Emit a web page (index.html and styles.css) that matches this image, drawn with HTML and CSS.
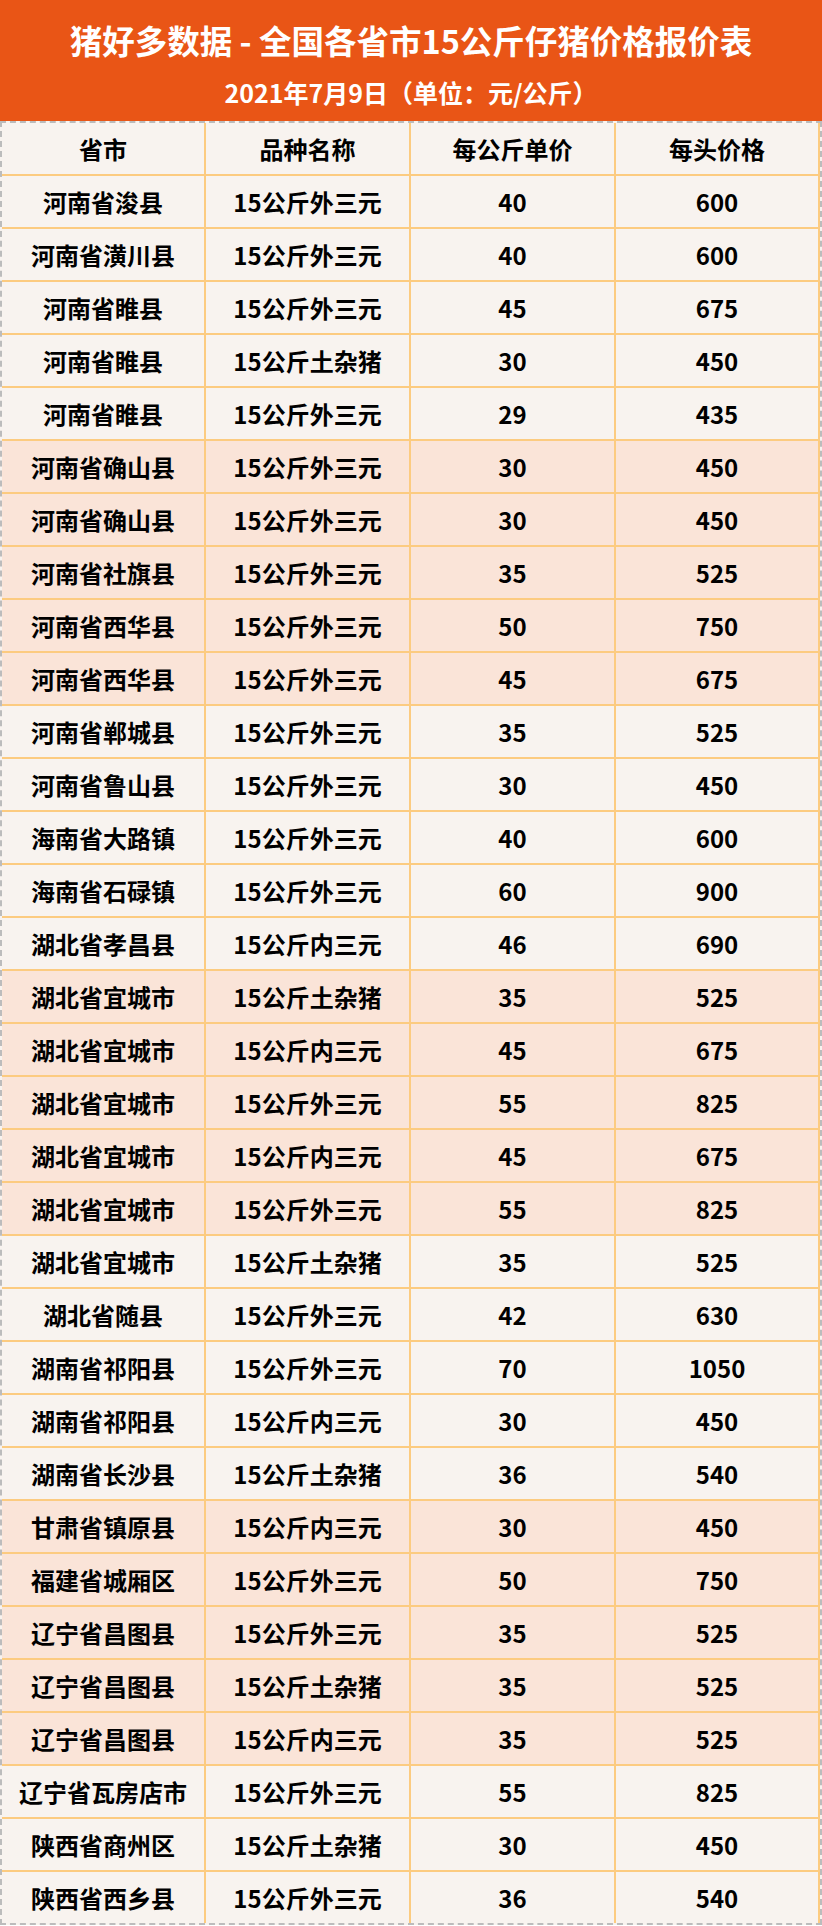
FILE: index.html
```html
<!DOCTYPE html>
<html lang="zh-CN">
<head>
<meta charset="utf-8">
<title>猪好多数据 - 全国各省市15公斤仔猪价格报价表</title>
<link rel="stylesheet" href="styles.css">
</head>
<body>
<div class="page">
  <header class="banner">
    <h1 class="title">猪好多数据 - 全国各省市15公斤仔猪价格报价表</h1>
    <p class="subtitle">2021年7月9日（单位：元/公斤）</p>
  </header>
  <div class="table">
    <div class="row head"><div class="cell">省市</div><div class="cell">品种名称</div><div class="cell">每公斤单价</div><div class="cell">每头价格</div></div>
    <div class="row"><div class="cell">河南省浚县</div><div class="cell">15公斤外三元</div><div class="cell">40</div><div class="cell">600</div></div>
    <div class="row"><div class="cell">河南省潢川县</div><div class="cell">15公斤外三元</div><div class="cell">40</div><div class="cell">600</div></div>
    <div class="row"><div class="cell">河南省睢县</div><div class="cell">15公斤外三元</div><div class="cell">45</div><div class="cell">675</div></div>
    <div class="row"><div class="cell">河南省睢县</div><div class="cell">15公斤土杂猪</div><div class="cell">30</div><div class="cell">450</div></div>
    <div class="row"><div class="cell">河南省睢县</div><div class="cell">15公斤外三元</div><div class="cell">29</div><div class="cell">435</div></div>
    <div class="row alt"><div class="cell">河南省确山县</div><div class="cell">15公斤外三元</div><div class="cell">30</div><div class="cell">450</div></div>
    <div class="row alt"><div class="cell">河南省确山县</div><div class="cell">15公斤外三元</div><div class="cell">30</div><div class="cell">450</div></div>
    <div class="row alt"><div class="cell">河南省社旗县</div><div class="cell">15公斤外三元</div><div class="cell">35</div><div class="cell">525</div></div>
    <div class="row alt"><div class="cell">河南省西华县</div><div class="cell">15公斤外三元</div><div class="cell">50</div><div class="cell">750</div></div>
    <div class="row alt"><div class="cell">河南省西华县</div><div class="cell">15公斤外三元</div><div class="cell">45</div><div class="cell">675</div></div>
    <div class="row"><div class="cell">河南省郸城县</div><div class="cell">15公斤外三元</div><div class="cell">35</div><div class="cell">525</div></div>
    <div class="row"><div class="cell">河南省鲁山县</div><div class="cell">15公斤外三元</div><div class="cell">30</div><div class="cell">450</div></div>
    <div class="row"><div class="cell">海南省大路镇</div><div class="cell">15公斤外三元</div><div class="cell">40</div><div class="cell">600</div></div>
    <div class="row"><div class="cell">海南省石碌镇</div><div class="cell">15公斤外三元</div><div class="cell">60</div><div class="cell">900</div></div>
    <div class="row"><div class="cell">湖北省孝昌县</div><div class="cell">15公斤内三元</div><div class="cell">46</div><div class="cell">690</div></div>
    <div class="row alt"><div class="cell">湖北省宜城市</div><div class="cell">15公斤土杂猪</div><div class="cell">35</div><div class="cell">525</div></div>
    <div class="row alt"><div class="cell">湖北省宜城市</div><div class="cell">15公斤内三元</div><div class="cell">45</div><div class="cell">675</div></div>
    <div class="row alt"><div class="cell">湖北省宜城市</div><div class="cell">15公斤外三元</div><div class="cell">55</div><div class="cell">825</div></div>
    <div class="row alt"><div class="cell">湖北省宜城市</div><div class="cell">15公斤内三元</div><div class="cell">45</div><div class="cell">675</div></div>
    <div class="row alt"><div class="cell">湖北省宜城市</div><div class="cell">15公斤外三元</div><div class="cell">55</div><div class="cell">825</div></div>
    <div class="row"><div class="cell">湖北省宜城市</div><div class="cell">15公斤土杂猪</div><div class="cell">35</div><div class="cell">525</div></div>
    <div class="row"><div class="cell">湖北省随县</div><div class="cell">15公斤外三元</div><div class="cell">42</div><div class="cell">630</div></div>
    <div class="row"><div class="cell">湖南省祁阳县</div><div class="cell">15公斤外三元</div><div class="cell">70</div><div class="cell">1050</div></div>
    <div class="row"><div class="cell">湖南省祁阳县</div><div class="cell">15公斤内三元</div><div class="cell">30</div><div class="cell">450</div></div>
    <div class="row"><div class="cell">湖南省长沙县</div><div class="cell">15公斤土杂猪</div><div class="cell">36</div><div class="cell">540</div></div>
    <div class="row alt"><div class="cell">甘肃省镇原县</div><div class="cell">15公斤内三元</div><div class="cell">30</div><div class="cell">450</div></div>
    <div class="row alt"><div class="cell">福建省城厢区</div><div class="cell">15公斤外三元</div><div class="cell">50</div><div class="cell">750</div></div>
    <div class="row alt"><div class="cell">辽宁省昌图县</div><div class="cell">15公斤外三元</div><div class="cell">35</div><div class="cell">525</div></div>
    <div class="row alt"><div class="cell">辽宁省昌图县</div><div class="cell">15公斤土杂猪</div><div class="cell">35</div><div class="cell">525</div></div>
    <div class="row alt"><div class="cell">辽宁省昌图县</div><div class="cell">15公斤内三元</div><div class="cell">35</div><div class="cell">525</div></div>
    <div class="row"><div class="cell">辽宁省瓦房店市</div><div class="cell">15公斤外三元</div><div class="cell">55</div><div class="cell">825</div></div>
    <div class="row"><div class="cell">陕西省商州区</div><div class="cell">15公斤土杂猪</div><div class="cell">30</div><div class="cell">450</div></div>
    <div class="row"><div class="cell">陕西省西乡县</div><div class="cell">15公斤外三元</div><div class="cell">36</div><div class="cell">540</div></div>
  </div>
</div>
</body>
</html>
```

FILE: styles.css
```css
html, body {
  margin: 0;
  padding: 0;
  background: #ffffff;
}

.page {
  width: 822px;
  font-family: "Noto Sans CJK SC", "Noto Sans", "DejaVu Sans", sans-serif;
  font-weight: 700;
  color: #000000;
}

.banner {
  height: 121px;
  background: #e95516;
  color: #ffffff;
  display: flex;
  flex-direction: column;
  align-items: center;
  box-sizing: border-box;
  padding-top: 19px;
}

.title {
  margin: 0;
  font-size: 32.5px;
  line-height: 42px;
  font-weight: 700;
  letter-spacing: 0;
}

.subtitle {
  margin: 16px 0 0;
  font-size: 25px;
  line-height: 30px;
  font-weight: 700;
}

.table {
  border: 2px dashed #bcbcbc;
  background: #f8f3ef;
}

.row {
  display: grid;
  grid-template-columns: 202px 203px 203px 202px;
  column-gap: 2px;
  background: #fccb80;
  border-bottom: 2px solid #fccb80;
}

.row:last-child {
  border-bottom: 0;
}

.cell {
  height: 51px;
  display: flex;
  align-items: center;
  justify-content: center;
  font-size: 24px;
  line-height: 1;
  background: #f8f3ef;
  white-space: nowrap;
}

.alt .cell {
  background: #fae4d8;
}
```
